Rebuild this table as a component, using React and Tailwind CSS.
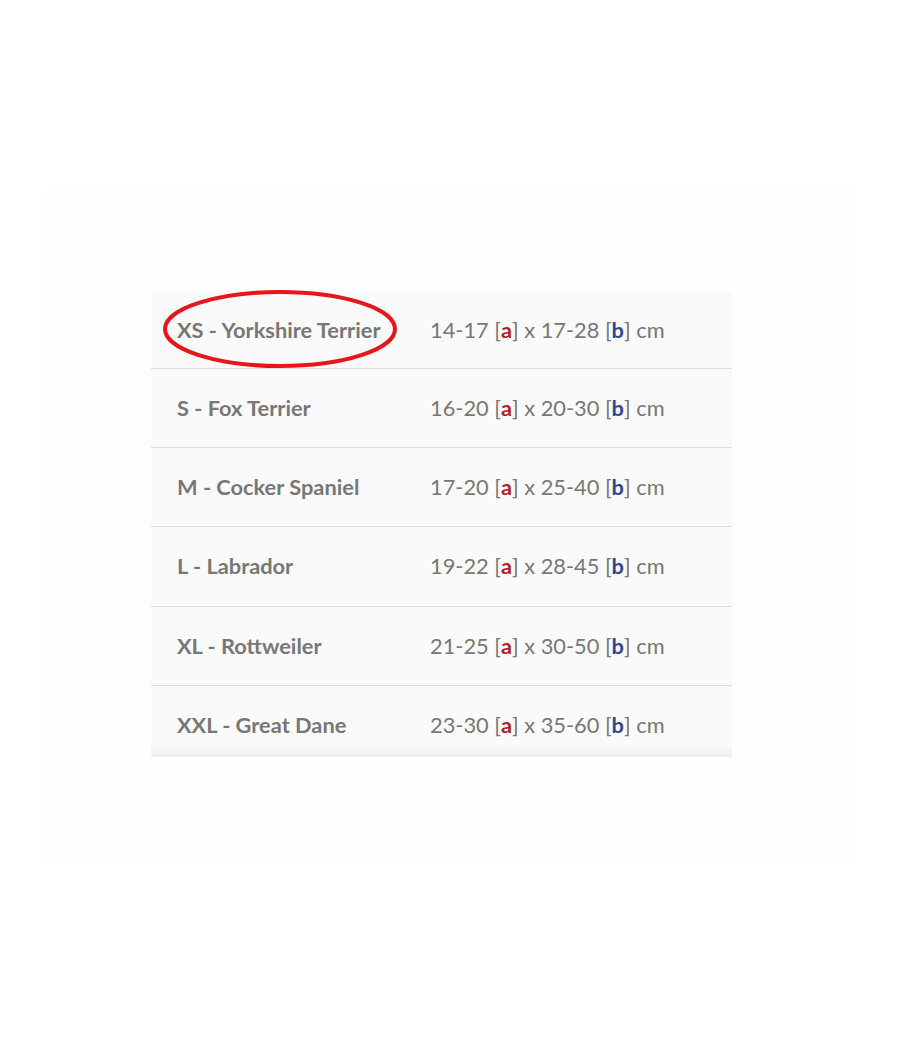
import React from "react";

const rows = [
  ["XS - Yorkshire Terrier", "14-17", "17-28"],
  ["S - Fox Terrier", "16-20", "20-30"],
  ["M - Cocker Spaniel", "17-20", "25-40"],
  ["L - Labrador", "19-22", "28-45"],
  ["XL - Rottweiler", "21-25", "30-50"],
  ["XXL - Great Dane", "23-30", "35-60"],
];

function rowClass(i) {
  if (i === 0) return "h-[77px] border-b border-[#dcdcdc]";
  if (i === 3) return "h-[80px] border-b border-[#dcdcdc]";
  if (i === rows.length - 1) return "h-[71px] pt-[7px] bg-gradient-to-b from-[#fafafa] from-80% to-[#efefef]";
  return "h-[79px] border-b border-[#dcdcdc]";
}

export default function App() {
  return (
    <div className="w-[900px] h-[1050px] bg-white pt-[190px]" style={{ fontFamily: "Lato, 'Open Sans', sans-serif" }}>
      <div className="mx-[44px] h-[672px] bg-[#fefefe] pt-[102px]">
        <div className="relative ml-[107px] w-[581px] bg-[#fafafa] text-[21.8px] text-[#777777]">
          {rows.map((r, i) => (
            <div key={i} className={`flex items-center ${rowClass(i)}`}>
              <div className="w-[279px] pl-[26px] font-bold">{r[0]}</div>
              <div>
                {r[1]} [<span className="font-bold text-[#b3202b]">a</span>] x {r[2]} [
                <span className="font-bold text-[#2a4798]">b</span>] cm
              </div>
            </div>
          ))}
          <svg className="absolute left-[11px] top-[-3px]" width="236" height="80" viewBox="0 0 236 80">
            <ellipse cx="118" cy="40" rx="115" ry="37" fill="none" stroke="#e8151b" strokeWidth="4" />
          </svg>
        </div>
      </div>
    </div>
  );
}
